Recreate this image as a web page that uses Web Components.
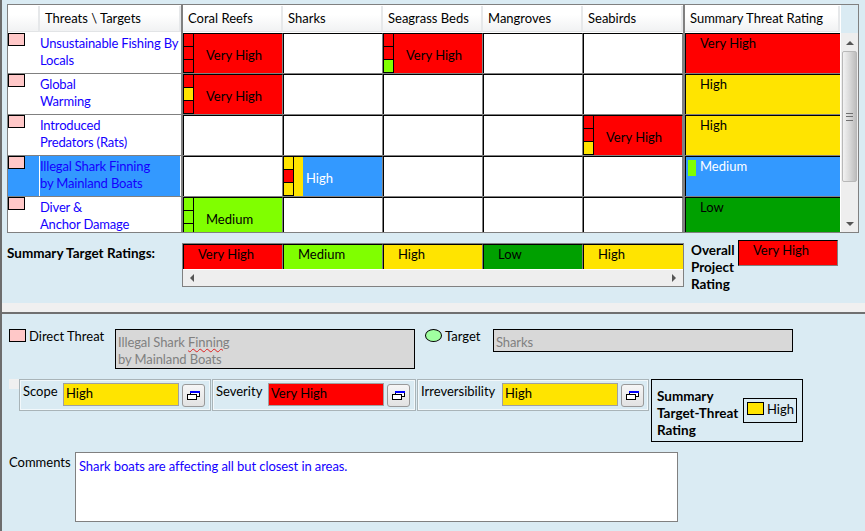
<!DOCTYPE html>
<html>
<head>
<meta charset="utf-8">
<title>Threat rating</title>
<style>
  html, body { margin: 0; height: 100%; overflow: hidden; }
  body { background: #daebf3; font: 13px Lato, "Liberation Sans", sans-serif; color: #000; }
</style>
</head>
<body>
<threat-app>
  <threat-matrix slot="top">
    <matrix-row chip>
      <span slot="name">Unsustainable Fishing By<br>Locals</span>
      <rating-cell level="vh" marks="vh vh vh">Very High</rating-cell>
      <rating-cell></rating-cell>
      <rating-cell level="vh" marks="vh vh me">Very High</rating-cell>
      <rating-cell></rating-cell>
      <rating-cell></rating-cell>
      <rating-cell slot="summary" summary level="vh">Very High</rating-cell>
    </matrix-row>
    <matrix-row>
      <span slot="name">Global<br>Warming</span>
      <rating-cell level="vh" marks="vh hi vh">Very High</rating-cell>
      <rating-cell></rating-cell>
      <rating-cell></rating-cell>
      <rating-cell></rating-cell>
      <rating-cell></rating-cell>
      <rating-cell slot="summary" summary level="hi">High</rating-cell>
    </matrix-row>
    <matrix-row>
      <span slot="name">Introduced<br>Predators (Rats)</span>
      <rating-cell></rating-cell>
      <rating-cell></rating-cell>
      <rating-cell></rating-cell>
      <rating-cell></rating-cell>
      <rating-cell level="vh" marks="vh vh hi">Very High</rating-cell>
      <rating-cell slot="summary" summary level="hi">High</rating-cell>
    </matrix-row>
    <matrix-row selected>
      <span slot="name">Illegal Shark Finning<br>by Mainland Boats</span>
      <rating-cell></rating-cell>
      <rating-cell level="hi" marks="hi vh hi" selected>High</rating-cell>
      <rating-cell></rating-cell>
      <rating-cell></rating-cell>
      <rating-cell></rating-cell>
      <rating-cell slot="summary" summary level="me" selected>Medium</rating-cell>
    </matrix-row>
    <matrix-row last>
      <span slot="name">Diver &amp;<br>Anchor Damage</span>
      <rating-cell level="me" marks="me me me">Medium</rating-cell>
      <rating-cell></rating-cell>
      <rating-cell></rating-cell>
      <rating-cell></rating-cell>
      <rating-cell></rating-cell>
      <rating-cell slot="summary" summary level="lo">Low</rating-cell>
    </matrix-row>
  </threat-matrix>
  <summary-strip slot="top"></summary-strip>
  <detail-panel slot="bottom"></detail-panel>
</threat-app>

<script>
const colors = { vh: '#ff0000', hi: '#ffe400', me: '#80ff00', lo: '#00a000' }

customElements.define('threat-app', class extends HTMLElement {
  constructor () {
    super()
    this.attachShadow({ mode: 'open' }).innerHTML = `
      <style>
        :host { display: block; height: 531px; border-left: 2px solid #6d6d6d; box-sizing: border-box; }
        .top { height: 303px; padding: 4px 0 0 5px; box-sizing: border-box; }
        .split { height: 9px; background: #f0f0f0; border-bottom: 2px solid #707070; }
      </style>
      <div class="top"><slot name="top"></slot></div>
      <div class="split"></div>
      <slot name="bottom"></slot>
    `
  }
})

customElements.define('threat-matrix', class extends HTMLElement {
  constructor () {
    super()
    this.attachShadow({ mode: 'open' }).innerHTML = `
      <style>
        :host { display: block; width: 852px; height: 229px; box-sizing: border-box; border: 1px solid #808080; background: #fff; overflow: hidden; }
        .head { display: grid; grid-template-columns: 32px 141px 2px repeat(5, 100px) 2px 155px 1fr; height: 28px; }
        .h { display: flex; align-items: center; padding: 0 0 2px 5px; box-sizing: border-box; height: 26px; margin-top: 1px;
             background: linear-gradient(#ffffff, #ffffff 35%, #f1f2f3); border-right: 2px solid #e6e8ea; border-bottom: 1px solid #e2e4e6; }
        .bar { background: #808080; }
        .scroll-corner { background: #daebf3; border-left: 1px solid #fff; }
        .body { display: flex; }
        .rows { flex: 1; min-width: 0; }
        .sb { width: 18px; height: 200px; box-sizing: border-box; background: #eeeeee; border-left: 1px solid #fff;
              display: flex; flex-direction: column; align-items: center; }
        .up { margin-top: 8px; width: 0; height: 0; border: 4px solid transparent; border-bottom: 4px solid #555; border-top: 0; }
        .thumb { margin-top: 6px; width: 15px; height: 131px; box-sizing: border-box; border: 1px solid #b8b8b8; border-radius: 2px;
                 background: linear-gradient(90deg, #f2f2f2, #dcdcdc 45%, #bdbdbd); display: flex; align-items: center; justify-content: center; }
        .grip { width: 7px; height: 6px; border-top: 1px solid #707070; border-bottom: 1px solid #707070; position: relative; }
        .grip::after { content: ''; position: absolute; left: 0; right: 0; top: 2px; height: 2px; border-top: 1px solid #707070; }
        .down { margin-top: 40px; width: 0; height: 0; border: 4px solid transparent; border-top: 4px solid #555; border-bottom: 0; }
      </style>
      <div class="head">
        <div class="h"></div>
        <div class="h">Threats \\ Targets</div>
        <div class="bar"></div>
        <div class="h">Coral Reefs</div>
        <div class="h">Sharks</div>
        <div class="h">Seagrass Beds</div>
        <div class="h">Mangroves</div>
        <div class="h">Seabirds</div>
        <div class="bar"></div>
        <div class="h">Summary Threat Rating</div>
        <div class="scroll-corner"></div>
      </div>
      <div class="body">
        <div class="rows"><slot></slot></div>
        <div class="sb">
          <div class="up"></div>
          <div class="thumb"><div class="grip"></div></div>
          <div class="down"></div>
        </div>
      </div>
    `
  }
})

customElements.define('matrix-row', class extends HTMLElement {
  constructor () {
    super()
    const selected = this.hasAttribute('selected')
    const last = this.hasAttribute('last')
    this.attachShadow({ mode: 'open' }).innerHTML = `
      <style>
        :host { display: grid; grid-template-columns: 32px 143px 500px 2px 155px; height: ${last ? 35 : 41}px;
                box-sizing: border-box; overflow: hidden; ${last ? '' : 'border-bottom: 1px solid #808080;'} }
        .num { background: ${selected ? '#3399ff' : '#fff'}; border-right: 1px solid #fff; }
        .name { box-sizing: border-box; padding: 2px 0 0 0; line-height: 17px; color: #1400ff; white-space: nowrap; letter-spacing: -0.17px;
                background: ${selected ? '#3399ff' : '#fff'}; border-right: 2px solid #808080;
                box-shadow: inset -1px 0 #fff; }
        .cells { display: grid; grid-template-columns: repeat(5, 100px); }
        .gap { background: #808080; }
      </style>
      <div class="num"><threat-chip></threat-chip></div>
      <div class="name"><slot name="name"></slot></div>
      <div class="cells"><slot></slot></div>
      <div class="gap"></div>
      <slot name="summary"></slot>
    `
  }
})

customElements.define('rating-cell', class extends HTMLElement {
  constructor () {
    super()
    const level = this.getAttribute('level')
    const selected = this.hasAttribute('selected')
    const summary = this.hasAttribute('summary')
    const marks = (this.getAttribute('marks') || '').split(' ').filter(Boolean)
    const bg = !level ? '#fff' : selected ? '#3399ff' : colors[level]
    this.attachShadow({ mode: 'open' }).innerHTML = `
      <style>
        :host { display: flex; box-sizing: border-box; height: 41px; overflow: hidden; background: ${bg};
                border-top: 1px solid #000; border-left: 1px solid #000; border-right: ${summary ? 0 : '1px solid #808080'};
                color: ${selected ? '#fff' : '#000'}; }
        .marks { width: 10px; flex: none; }
        .marks i { display: block; box-sizing: border-box; height: 13px; border-right: 1px solid #000; border-bottom: 1px solid #000; }
        .bar { flex: none; width: 9px; background: ${colors[level] || 'transparent'}; }
        .txt { padding: 13px 0 0 12px; line-height: 17px; white-space: nowrap; }
        .sel { padding-left: 3px; }
        .sum { padding: 1px 0 0 14px; }
        .swatch { margin: 3px 0 0 2px; width: 8px; height: 16px; background: ${colors[level] || 'transparent'}; flex: none; }
        .sum.after { padding-left: 4px; }
      </style>
      ${marks.length ? `<div class="marks">${marks.map(m => `<i style="background:${colors[m]}"></i>`).join('')}</div>` : ''}
      ${marks.length && selected ? '<div class="bar"></div>' : ''}
      ${summary && selected ? '<div class="swatch"></div>' : ''}
      <div class="txt ${summary ? 'sum' : ''} ${summary && selected ? 'after' : ''} ${marks.length && selected ? 'sel' : ''}"><slot></slot></div>
    `
  }
})

customElements.define('threat-chip', class extends HTMLElement {
  constructor () {
    super()
    const fill = this.getAttribute('fill') || '#ffc8c8'
    const round = this.hasAttribute('round')
    this.attachShadow({ mode: 'open' }).innerHTML = `
      <style>
        :host { display: block; width: 17px; height: 13px; box-sizing: border-box; border: 1px solid #000;
                background: ${fill}; ${round ? 'border-radius: 50%;' : ''} flex: none; }
      </style>
    `
  }
})

customElements.define('summary-strip', class extends HTMLElement {
  constructor () {
    super()
    const cells = [['vh', 'Very High'], ['me', 'Medium'], ['hi', 'High'], ['lo', 'Low'], ['hi', 'High']]
    this.attachShadow({ mode: 'open' }).innerHTML = `
      <style>
        :host { display: flex; align-items: flex-start; padding-top: 7px; }
        .label { width: 175px; font-weight: 700; font-size: 13.5px; line-height: 17px; margin-top: 5px; }
        .box { width: 502px; height: 44px; margin-top: 3px; box-sizing: border-box; border: 1px solid #808080; background: #eee; }
        .cells { display: grid; grid-template-columns: repeat(5, 100px); height: 25px; border-bottom: 1px solid #fff; }
        .cells div { box-sizing: border-box; border-top: 1px solid #000; border-left: 1px solid #000; border-right: 1px solid #808080;
                     padding: 1px 0 0 14px; line-height: 17px; }
        .cells div:nth-child(5) { border-right: 0; }
        .hs { height: 16px; display: flex; justify-content: space-between; align-items: center; padding: 0 7px 0 7px; }
        .l { width: 0; height: 0; border: 4px solid transparent; border-right: 4px solid #555; border-left: 0; }
        .r { width: 0; height: 0; border: 4px solid transparent; border-left: 4px solid #555; border-right: 0; }
        .overall { width: 47px; margin-left: 7px; font-weight: 700; font-size: 13.5px; line-height: 17px; margin-top: 2px; }
        .rating { width: 100px; height: 26px; box-sizing: border-box; background: #ff0000; border: 1px solid #808080;
                  border-top-color: #000; border-left-color: #000; padding: 1px 0 0 14px; line-height: 17px; }
      </style>
      <div class="label">Summary Target Ratings:</div>
      <div class="box">
        <div class="cells">${cells.map(c => `<div style="background:${colors[c[0]]}">${c[1]}</div>`).join('')}</div>
        <div class="hs"><span class="l"></span><span class="r"></span></div>
      </div>
      <div class="overall">Overall<br>Project<br>Rating</div>
      <div class="rating">Very High</div>
    `
  }
})

customElements.define('rating-field', class extends HTMLElement {
  constructor () {
    super()
    const level = this.getAttribute('level')
    const label = this.getAttribute('label')
    this.attachShadow({ mode: 'open' }).innerHTML = `
      <style>
        :host { display: flex; box-sizing: border-box; height: 32px; padding: 3px 5px 0 3px; align-items: flex-start;
                border: 1px solid #a9b4b8; box-shadow: inset 0 0 0 1px #f2f8fb; }
        .label { flex: 1; line-height: 17px; }
        .value { box-sizing: border-box; width: 116px; height: 23px; background: ${colors[level]}; border: 1px solid #a0a0a0;
                 padding: 1px 0 0 2px; line-height: 17px; }
        button { box-sizing: border-box; width: 23px; height: 23px; margin: 1px 0 0 3px; padding: 0; border: 1px solid #999; border-radius: 3px;
                 background: linear-gradient(#f6f6f6, #e2e2e2); display: flex; align-items: center; justify-content: center; }
      </style>
      <div class="label">${label}</div>
      <div class="value"><slot></slot></div>
      <button><svg width="13" height="9" viewBox="0 0 13 9">
        <rect x="3.5" y="0.5" width="9" height="5" fill="#fff" stroke="#000"/>
        <rect x="3" y="0" width="10" height="2" fill="#0000ff"/>
        <rect x="0.5" y="3.5" width="9" height="5" fill="#fff" stroke="#000"/>
        <rect x="0" y="3" width="10" height="1" fill="#000"/>
      </svg></button>
    `
  }
})

customElements.define('detail-panel', class extends HTMLElement {
  constructor () {
    super()
    this.attachShadow({ mode: 'open' }).innerHTML = `
      <style>
        :host { display: block; padding: 15px 0 0 7px; }
        .line1 { display: flex; align-items: flex-start; height: 50px; }
        .lab { line-height: 17px; margin: -1px 0 0 3px; }
        .ro { box-sizing: border-box; background: #d8d8d8; border: 1px solid #000; color: #808080; width: 300px; padding: 4px 0 0 2px; line-height: 17px; letter-spacing: -0.1px; }
        .squig { text-decoration: underline wavy #e02020 1px; text-underline-offset: 1px; }
        .line2 { display: flex; align-items: flex-start; }
        .pad { width: 10px; height: 10px; background: #f0f0f0; flex: none; }
        rating-field { margin-right: 1px; }
        .sumbox { box-sizing: border-box; width: 152px; height: 63px; margin-left: 1px; border: 1px solid #000; padding: 8px 0 0 5px;
                  display: flex; font-weight: 700; font-size: 13.5px; line-height: 17px; }
        .sumtxt { width: 86px; flex: none; }
        .inner { box-sizing: border-box; width: 54px; height: 25px; margin-top: 10px; border: 1px solid #000; font-weight: 400; font-size: 13px; display: flex; align-items: flex-start; padding: 3px 0 0 3px; }
        .inner span { margin: -1px 0 0 3px; }
        .line3 { display: flex; align-items: flex-start; margin-top: 10px; }
        .clab { width: 66px; line-height: 17px; margin: 2px 0 0 0; }
        .cbox { box-sizing: border-box; width: 603px; height: 70px; background: #fff; border: 1px solid #808080; color: #1400ff; padding: 5px 0 0 3px; line-height: 17px; letter-spacing: -0.08px; }
      </style>
      <div class="line1">
        <threat-chip></threat-chip>
        <div class="lab" style="width:86px">Direct Threat</div>
        <div class="ro" style="height:40px">Illegal Shark <span class="squig">Finning</span><br>by Mainland Boats</div>
        <threat-chip fill="#a0ffa0" round style="margin-left:10px"></threat-chip>
        <div class="lab" style="width:48px">Target</div>
        <div class="ro" style="height:23px">Sharks</div>
      </div>
      <div class="line2">
        <div class="pad"></div>
        <rating-field level="hi" label="Scope" style="width:192px">High</rating-field>
        <rating-field level="vh" label="Severity" style="width:204px">Very High</rating-field>
        <rating-field level="hi" label="Irreversibility" style="width:232px;padding-right:4px">High</rating-field>
        <div class="sumbox">
          <div class="sumtxt">Summary<br>Target-Threat<br>Rating</div>
          <div class="inner"><threat-chip fill="#ffe400"></threat-chip><span>High</span></div>
        </div>
      </div>
      <div class="line3">
        <div class="clab">Comments</div>
        <div class="cbox">Shark boats are affecting all but closest in areas.</div>
      </div>
    `
  }
})
</script>
</body>
</html>
